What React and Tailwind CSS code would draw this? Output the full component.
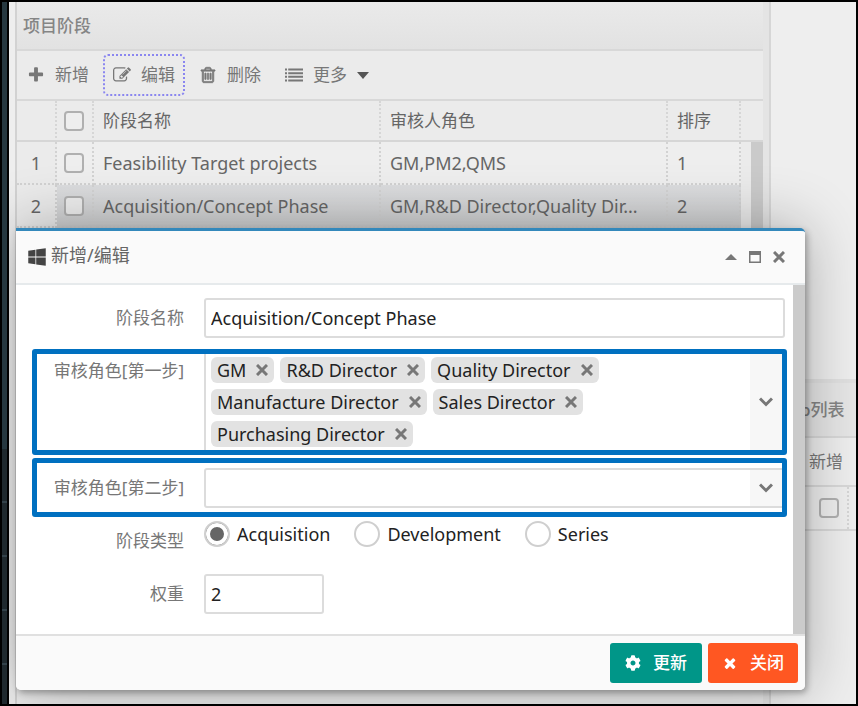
import { FaCog, FaWindows } from "react-icons/fa";

const latin = "font-['Noto_Sans','Noto_Sans_CJK_SC',sans-serif] text-lg/6";
const PATHS = {
  plus: "M1600 736v192q0 40-28 68t-68 28h-416v416q0 40-28 68t-68 28h-192q-40 0-68-28t-28-68v-416h-416q-40 0-68-28t-28-68v-192q0-40 28-68t68-28h416v-416q0-40 28-68t68-28h192q40 0 68 28t28 68v416h416q40 0 68 28t28 68z",
  edit: "M888 1184l116-116-152-152-116 116v56h96v96h56zm440-720q-16-16-33 1l-350 350q-17 17-1 33t33-1l350-350q17-17 1-33zm80 594v190q0 119-84.5 203.5t-203.5 84.5h-832q-119 0-203.5-84.5t-84.5-203.5v-832q0-119 84.5-203.5t203.5-84.5h832q63 0 117 25 15 7 18 23 3 17-9 29l-49 49q-14 14-32 8-23-6-45-6h-832q-66 0-113 47t-47 113v832q0 66 47 113t113 47h832q66 0 113-47t47-113v-126q0-13 9-22l64-64q15-15 35-7t20 29zm-96-738l288 288-672 672h-288v-288zm444 132l-92 92-288-288 92-92q28-28 68-28t68 28l152 152q28 28 28 68t-28 68z",
  trash: "M704 736v576q0 14-9 23t-23 9h-64q-14 0-23-9t-9-23v-576q0-14 9-23t23-9h64q14 0 23 9t9 23zm256 0v576q0 14-9 23t-23 9h-64q-14 0-23-9t-9-23v-576q0-14 9-23t23-9h64q14 0 23 9t9 23zm256 0v576q0 14-9 23t-23 9h-64q-14 0-23-9t-9-23v-576q0-14 9-23t23-9h64q14 0 23 9t9 23zm128 724v-948h-896v948q0 22 7 40.5t14.5 27 10.5 8.5h832q3 0 10.5-8.5t14.5-27 7-40.5zm-672-1076h448l-48-117q-7-9-17-11h-317q-10 2-17 11zm928 32v64q0 14-9 23t-23 9h-96v948q0 83-47 143.5t-113 60.5h-832q-66 0-113-58.5t-47-141.5v-952h-96q-14 0-23-9t-9-23v-64q0-14 9-23t23-9h309l70-167q15-37 54-63t79-26h320q40 0 79 26t54 63l70 167h309q14 0 23 9t9 23z",
  list: "M0 256h200v200H0zM320 256h1472v200H320zM0 616h200v200H0zM320 616h1472v200H320zM0 976h200v200H0zM320 976h1472v200H320zM0 1336h200v200H0zM320 1336h1472v200H320z",
  times: "M1490 1322q0 40-28 68l-136 136q-28 28-68 28t-68-28l-294-294-294 294q-28 28-68 28t-68-28l-136-136q-28-28-28-68t28-68l294-294-294-294q-28-28-28-68t28-68l136-136q28-28 68-28t68 28l294 294 294-294q28-28 68-28t68 28l136 136q28 28 28 68t-28 68l-294 294 294 294q28 28 28 68z",
};

function Glyph({ name, className = "size-[18px]" }) {
  return (
    <svg
      viewBox="0 0 1792 1792"
      fill="currentColor"
      stroke="currentColor"
      strokeWidth={name === "trash" ? 70 : 0}
      className={className}
      aria-hidden="true"
    >
      <path d={PATHS[name]} />
    </svg>
  );
}

function Cross() {
  return (
    <svg viewBox="0 0 12 12" className="size-3" fill="none" stroke="currentColor" strokeWidth="3" aria-hidden="true">
      <path d="M1 1L11 11M11 1L1 11" />
    </svg>
  );
}

function Chevron() {
  return (
    <svg viewBox="0 0 14 10" className="h-[10px] w-[14px] text-[#777]" fill="none" stroke="currentColor" strokeWidth="3" aria-hidden="true">
      <path d="M1 1.5L7 7.5L13 1.5" />
    </svg>
  );
}

function Check({ label }) {
  return (
    <input
      type="checkbox"
      aria-label={label}
      className="block size-5 appearance-none rounded border-2 border-[#b0b0b0] bg-[#eeeeee]"
    />
  );
}

function ToolButton({ icon, children, active, caret }) {
  return (
    <button
      type="button"
      className={
        "flex h-[42px] items-center gap-[10px] rounded-[5px] border-2 border-dotted px-2 " +
        (active ? "border-[#8a86f0]" : "border-transparent")
      }
    >
      <Glyph name={icon} />
      <span>{children}</span>
      {caret && (
        <svg viewBox="0 0 14 8" className="h-[7px] w-3 text-[#555]" fill="currentColor" aria-hidden="true">
          <path d="M0 0h14L7 8z" />
        </svg>
      )}
    </button>
  );
}

const rows = [
  { id: 1, name: "Feasibility Target projects", roles: "GM,PM2,QMS", order: 1 },
  { id: 2, name: "Acquisition/Concept Phase", roles: "GM,R&D Director,Quality Dir...", order: 2, selected: true },
];

const cell = "border-r-2 border-b-2 border-dotted border-[#d2d2d2]";
const head = "border-r-2 border-b-2 border-[#d6d6d6] [border-right-style:dotted]";

function StagePanel() {
  return (
    <section className="min-w-0 flex-1 border-l-2 border-[#d2d2d2] bg-[#ebebeb]">
      <h1 className="flex h-[49px] items-center border-b-2 border-[#d8d8d8] bg-linear-to-b from-[#eaeaea] to-[#e2e2e2] px-[6px] font-medium text-[#858585]">
        项目阶段
      </h1>
      <div className="flex h-[50px] items-center gap-1 border-b-2 border-[#d8d8d8] text-[#777]">
        <ToolButton icon="plus">新增</ToolButton>
        <ToolButton icon="edit" active>编辑</ToolButton>
        <ToolButton icon="trash">删除</ToolButton>
        <ToolButton icon="list" caret>更多</ToolButton>
      </div>
      <table className="w-full table-fixed border-separate border-spacing-0 text-[#666]">
        <colgroup>
          <col className="w-10" />
          <col className="w-[37px]" />
          <col />
          <col />
          <col className="w-[73px]" />
          <col className="w-[22px]" />
        </colgroup>
        <thead>
          <tr className="h-[41px] text-left">
            <th className={head} />
            <th className={head + " pl-[7px]"}><Check label="全选" /></th>
            <th className={head + " px-[9px] font-normal"}>阶段名称</th>
            <th className={head + " px-[9px] font-normal"}>审核人角色</th>
            <th className={head + " px-[9px] font-normal"}>排序</th>
            <th className="border-b-2 border-[#d6d6d6]" />
          </tr>
        </thead>
        <tbody className={latin}>
          {rows.map((r) => (
            <tr
              key={r.id}
              className={"h-[43px] " + (r.selected ? "bg-linear-to-b from-[#dcdddf] to-[#cfd0d1]" : "bg-[#eeeeee]")}
            >
              <td className={cell + " bg-[#ebebeb] text-center"}>{r.id}</td>
              <td className={cell + " pl-[7px]"}><Check label={r.name} /></td>
              <td className={cell + " px-[9px] whitespace-nowrap"}>{r.name}</td>
              <td className={cell + " px-[9px] whitespace-nowrap"}>{r.roles}</td>
              <td className={cell + " px-[9px]"}>{r.order}</td>
              {r.id === 1 && (
                <td rowSpan={2} className="bg-[#ebebeb] p-0 pl-[10px]">
                  <div className="h-[86px] bg-[#cacaca]" />
                </td>
              )}
            </tr>
          ))}
        </tbody>
      </table>
    </section>
  );
}

function SidePanel() {
  return (
    <section className="w-[85px] shrink-0 bg-[#eeeeee] text-[#777]">
      <div className="h-[381px] border-b-4 border-[#e0e0e0]" />
      <h2 className="flex h-[55px] items-center border-b-2 border-[#d8d8d8] bg-[#e6e6e6] pl-[29px] font-medium text-[#858585]">
        p列表
      </h2>
      <div className="flex h-[49px] items-center border-b-2 border-[#d8d8d8] pl-[38px]">
        <button type="button" className="whitespace-nowrap">新增</button>
      </div>
      <div className="flex h-[44px] items-center border-b-2 border-[#d8d8d8]">
        <div className="flex h-full w-[78px] items-center justify-end border-r-2 border-dotted border-[#d6d6d6] pr-2">
          <Check label="列表全选" />
        </div>
      </div>
    </section>
  );
}

const fieldRow = "grid grid-cols-[152px_minmax(0,1fr)] gap-x-5 pr-[2px]";
const marked = " rounded-[3px] outline-5 -outline-offset-5 outline-[#0070c0]";
const label = "text-right text-[#777] leading-6";
const box = "h-10 rounded-[3px] border-2 border-[#dcdcdc] bg-white px-[5px] text-[#222] outline-none ";

const firstStep = ["GM", "R&D Director", "Quality Director", "Manufacture Director", "Sales Director", "Purchasing Director"];

function EditDialog() {
  return (
    <div
      role="dialog"
      aria-label="新增/编辑"
      className="absolute top-[226px] right-[51px] left-[7px] overflow-hidden rounded-[5px] rounded-tl-none border-t-3 border-[#3388bb] bg-white shadow-[2px_3px_6px_rgba(0,0,0,0.3),0_0_60px_rgba(0,0,0,0.3)]"
    >
      <header className="flex h-[54px] items-center border-b-2 border-[#e6eaec] bg-[#fafafa] pr-5 pl-[11px] text-[#666]">
        <FaWindows className="size-5 text-[#444]" />
        <h2 className="ml-1 flex-1 pb-1 text-lg/6">新增/编辑</h2>
        <div className="flex items-center gap-3 text-[#777]">
          <button type="button" aria-label="折叠">
            <svg viewBox="0 0 12 6" className="h-[6px] w-3" fill="currentColor"><path d="M0 6h12L6 0z" /></svg>
          </button>
          <button type="button" aria-label="最大化">
            <svg viewBox="0 0 12 12" className="size-3" fill="none" stroke="currentColor"><path d="M0 2.5h12" strokeWidth="3" /><path d="M.75.75h10.5v10.5H.75z" strokeWidth="1.5" /></svg>
          </button>
          <button type="button" aria-label="关闭窗口"><Cross /></button>
        </div>
      </header>

      <div className="flex">
        <form className="min-w-0 flex-1 pt-[13px] pr-[6px] pb-5 pl-4">
          <div className={fieldRow + " items-center"}>
            <label htmlFor="name" className={label}>阶段名称</label>
            <input id="name" defaultValue="Acquisition/Concept Phase" className={box + latin} />
          </div>

          <div className={fieldRow + marked + " mt-[11px]"}>
            <span id="step1" className={label + " pt-[10px]"}>审核角色[第一步]</span>
            <div role="group" aria-labelledby="step1" className="flex border-l-2 border-[#dcdcdc]">
              <ul className={"flex min-h-[106px] flex-1 flex-wrap content-start gap-x-[6px] gap-y-[6px] py-2 pr-16 pl-[5px] text-[#222] " + latin}>
                {firstStep.map((name) => (
                  <li key={name} className="flex h-[26px] items-center gap-[10px] rounded-[6px] bg-[#e2e2e2] px-[6px] whitespace-nowrap">
                    {name}
                    <button type="button" aria-label={"移除 " + name} className="text-[#777]"><Cross /></button>
                  </li>
                ))}
              </ul>
              <button type="button" aria-label="展开角色" className="flex w-[35px] items-center justify-center bg-[#f7f7f7] pr-1"><Chevron /></button>
            </div>
          </div>

          <div className={fieldRow + marked + " mt-[3px] pt-[10px] pb-[9px]"}>
            <label htmlFor="step2" className={label + " pt-2"}>审核角色[第二步]</label>
            <div className="grid">
              <select id="step2" defaultValue="" className={box + "col-start-1 row-start-1 w-full appearance-none"}>
                <option value="" />
              </select>
              <span className="pointer-events-none col-start-1 row-start-1 my-[2px] flex w-[35px] items-center justify-center justify-self-end bg-[#f7f7f7] pr-1"><Chevron /></span>
            </div>
          </div>

          <fieldset className={fieldRow + " mt-1 h-[53px]"} aria-labelledby="kind">
            <span id="kind" className={label + " pt-2"}>阶段类型</span>
            <div className={"flex h-[26px] items-center gap-6 text-[#222] " + latin}>
              {["Acquisition", "Development", "Series"].map((t, i) => (
                <label key={t} className="flex items-center gap-[7px]">
                  <input
                    type="radio"
                    name="kind"
                    defaultChecked={i === 0}
                    className="size-[26px] appearance-none rounded-full border-2 border-[#cfcfcf] bg-white checked:bg-[#666] checked:shadow-[inset_0_0_0_4px_white]"
                  />
                  {t}
                </label>
              ))}
            </div>
          </fieldset>

          <div className={fieldRow + " items-center"}>
            <label htmlFor="weight" className={label}>权重</label>
            <input id="weight" defaultValue="2" className={box + "w-[120px] " + latin} />
          </div>
        </form>
        <div className="w-3 bg-[#cbcbcb]" />
      </div>

      <footer className="flex justify-end gap-[6px] border-t-2 border-[#e0e0e0] bg-[#fafafa] py-[7px] pr-[7px] font-medium text-white">
        <button type="button" className="flex h-10 items-center gap-3 rounded-[3px] bg-[#009688] px-[15px]">
          <FaCog className="size-4" />更新
        </button>
        <button type="button" className="flex h-10 items-center gap-3 rounded-[3px] bg-[#ff5722] px-[14px]">
          <Glyph name="times" className="size-4" />关闭
        </button>
      </footer>
    </div>
  );
}

export default function App() {
  return (
    <div className="flex min-h-screen border-2 border-black bg-[#eeeeee] font-['Noto_Sans','Noto_Sans_CJK_SC',sans-serif] text-[17px] leading-6">
      <nav className="w-[7px] shrink-0 border-r-2 border-black bg-[#1f292e]">
        <div className="h-[447px] bg-[#263840]" />
        <div className="h-[54px] border-b-2 border-[#33424a]" />
        <div className="h-[54px] border-b-2 border-[#33424a]" />
        <div className="h-[54px] border-b-2 border-[#33424a]" />
        <div className="h-[54px] border-b-2 border-[#33424a]" />
      </nav>
      <main className="relative flex min-w-0 flex-1 overflow-hidden pl-[6px]">
        <StagePanel />
        <div className="w-2 shrink-0 border-r-2 border-[#d6d6d6] bg-[#e4e4e4]" />
        <SidePanel />
        <EditDialog />
      </main>
    </div>
  );
}
